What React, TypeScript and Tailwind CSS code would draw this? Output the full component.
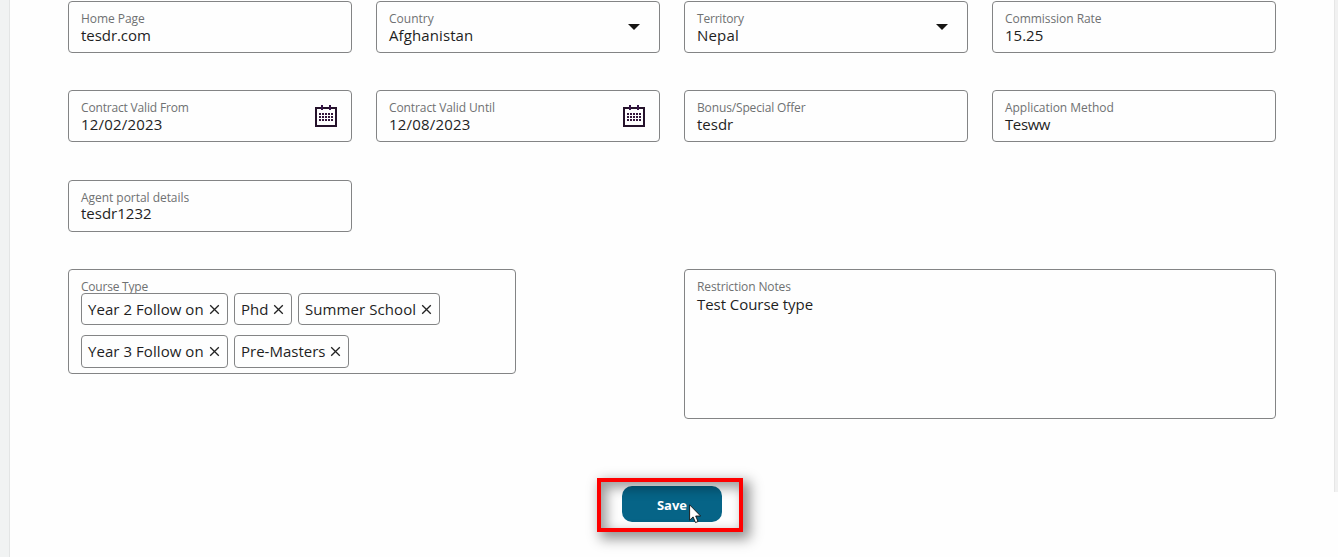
import type { ReactNode } from "react";

const labelCls =
  "block whitespace-nowrap text-[12px] leading-[14px] font-medium text-[#6f7172]";
const valueCls =
  "block whitespace-nowrap text-[15px] leading-[18px] text-[#1f1f1f]";

function CalendarIcon() {
  const rows = [8, 11, 14];
  const cols = [4, 7, 10, 13, 16];
  return (
    <svg width="22" height="22" viewBox="0 0 22 22" shapeRendering="crispEdges">
      <path d="M0 2H22V22H0ZM2 4V20H20V4Z" fill="#25122b" fillRule="evenodd" />
      <path d="M6 0H8V5H6ZM14 0H16V5H14Z" fill="#351447" />
      {rows.map((y) =>
        cols.map((x) => (
          <rect key={`${x}-${y}`} x={x} y={y} width="2" height="2" fill="#35183c" />
        )),
      )}
    </svg>
  );
}

function Caret() {
  return (
    <svg width="12" height="6" viewBox="0 0 12 6">
      <path d="M0 0H12L6 6Z" fill="#161513" />
    </svg>
  );
}

type FieldProps = {
  label: string;
  value: string;
  labelTrack?: string;
  valueTrack?: string;
  children?: ReactNode;
};

function Field({ label, value, labelTrack = "", valueTrack = "", children }: FieldProps) {
  return (
    <div className="flex h-[52px] w-[284px] justify-between rounded-[4px] border border-[#838485] pl-3 pr-[14px]">
      <div className="pt-[10px]">
        <span className={`${labelCls} ${labelTrack}`}>{label}</span>
        <span className={`${valueCls} ${valueTrack}`}>{value}</span>
      </div>
      {children}
    </div>
  );
}

function Chip({ text, box, track = "" }: { text: string; box: string; track?: string }) {
  return (
    <div
      className={`flex shrink-0 items-center justify-between rounded-[4px] border border-[#838485] pl-[6px] pr-[7px] ${box}`}
    >
      <span className={`${valueCls} ${track}`}>{text}</span>
      <svg width="11" height="11" viewBox="0 0 11 11">
        <path d="M1.2 1.2L9.8 9.8M9.8 1.2L1.2 9.8" stroke="#222" strokeWidth="1.3" />
      </svg>
    </div>
  );
}

export default function App() {
  return (
    <div className="relative flex h-[557px] w-[1338px] overflow-hidden bg-[#fefefe] font-['Open_Sans',sans-serif]">
      <div className="w-[10px] shrink-0 border-r border-[#e3e5e5] bg-[#f1f3f3]" />
      <main className="flex w-[1324px] shrink-0 flex-col pl-[58px] pt-px">
        <div className="flex gap-6">
          <Field label="Home Page" value="tesdr.com" labelTrack="tracking-[-0.05px]" valueTrack="tracking-[-0.05px]" />
          <Field label="Country" value="Afghanistan" valueTrack="tracking-[0.1px]">
            <div className="pr-[5px] pt-[22px]">
              <Caret />
            </div>
          </Field>
          <Field label="Territory" value="Nepal" labelTrack="tracking-[-0.2px]" valueTrack="tracking-[0.2px]">
            <div className="pr-[5px] pt-[22px]">
              <Caret />
            </div>
          </Field>
          <Field label="Commission Rate" value="15.25" labelTrack="tracking-[-0.05px]" />
        </div>
        <div className="mt-[37px] flex gap-6">
          <Field
            label="Contract Valid From"
            value="12/02/2023"
            labelTrack="tracking-[-0.17px]"
            valueTrack="tracking-[0.2px]"
          >
            <div className="pt-[14px]">
              <CalendarIcon />
            </div>
          </Field>
          <Field
            label="Contract Valid Until"
            value="12/08/2023"
            labelTrack="tracking-[-0.1px]"
            valueTrack="tracking-[0.2px]"
          >
            <div className="pt-[14px]">
              <CalendarIcon />
            </div>
          </Field>
          <Field label="Bonus/Special Offer" value="tesdr" labelTrack="tracking-[-0.14px]" />
          <Field label="Application Method" value="Tesww" labelTrack="tracking-[-0.04px]" valueTrack="tracking-[-0.4px]" />
        </div>
        <div className="mt-[38px] flex">
          <Field
            label="Agent portal details"
            value="tesdr1232"
            labelTrack="tracking-[-0.04px]"
            valueTrack="-mt-px"
          />
        </div>
        <div className="mt-[37px] flex h-[150px] items-start gap-[168px]">
          <div className="h-[105px] w-[448px] rounded-[4px] border border-[#838485] pl-3 pt-[10px]">
            <span className={`${labelCls} h-[13px] tracking-[-0.22px]`}>Course Type</span>
            <div className="flex gap-[6px]">
              <Chip text="Year 2 Follow on" box="w-[147px] h-[32px]" track="tracking-[0.06px]" />
              <Chip text="Phd" box="w-[58px] h-[32px]" />
              <Chip text="Summer School" box="w-[142px] h-[32px]" track="tracking-[0.08px]" />
            </div>
            <div className="mt-[10px] flex gap-[6px]">
              <Chip text="Year 3 Follow on" box="w-[147px] h-[33px] pb-px" track="tracking-[0.06px]" />
              <Chip text="Pre-Masters" box="w-[115px] h-[33px] pb-px" />
            </div>
          </div>
          <div className="h-[150px] w-[592px] rounded-[4px] border border-[#838485] pl-3 pt-[10px]">
            <span className={`${labelCls} tracking-[-0.12px]`}>Restriction Notes</span>
            <span className={`${valueCls} mt-px tracking-[-0.05px]`}>Test Course type</span>
          </div>
        </div>
        <div className="ml-[529px] mt-[59px] flex h-[54px] w-[146px] pl-[25px] pt-2">
          <button className="h-[36px] w-[100px] rounded-[10px] bg-[#066487] pt-[3px] text-[13px] font-bold text-white">
            Save
          </button>
        </div>
      </main>
      <div className="h-[492px] w-[4px] shrink-0 border-l border-[#e6e6e6] bg-[#f1f1f1]" />
      <div className="absolute left-[597px] top-[478px] h-[54px] w-[146px] border-4 border-[#fe0000] shadow-[5px_5px_12px_2px_rgba(0,0,0,0.42),inset_5px_5px_12px_1px_rgba(0,0,0,0.38)]" />
      <svg className="absolute left-[689px] top-[504px]" width="13" height="20" viewBox="0 0 13 20">
        <path
          d="M0.6 0.8V16.2L4.1 12.9L6.5 18.6L9 17.5L6.7 12H11.6Z"
          fill="#fff"
          stroke="#111"
          strokeWidth="0.9"
        />
      </svg>
    </div>
  );
}
